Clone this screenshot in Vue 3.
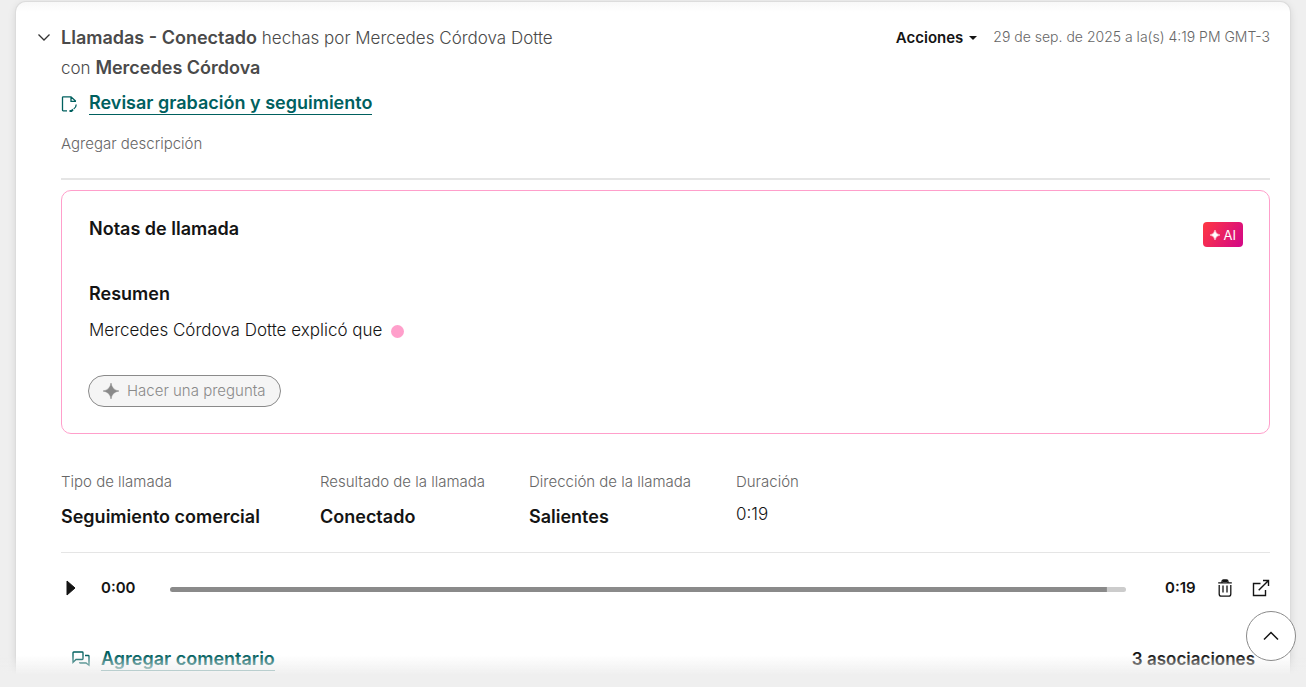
<script setup>
import { ref } from 'vue'

const position = ref(98)
const details = [
  { label: 'Tipo de llamada', value: 'Seguimiento comercial', action: true },
  { label: 'Resultado de la llamada', value: 'Conectado', action: true },
  { label: 'Dirección de la llamada', value: 'Salientes', action: true },
  { label: 'Duración', value: '0:19', action: false }
]
</script>

<template>
  <main class="page">
    <article class="card">
      <header class="head">
        <button class="icon-btn toggle" aria-label="Contraer">
          <svg width="14" height="14" viewBox="0 0 14 14"><path d="M1.5 4.5 7 10l5.500-5.500" fill="none" stroke="currentColor" stroke-width="1.300" /></svg>
        </button>
        <div class="title">
          <div><b>Llamadas - Conectado</b> hechas por Mercedes Córdova Dotte</div>
          <div>con <b>Mercedes Córdova</b></div>
        </div>
        <div class="meta">
          <button class="actions">Acciones
            <svg width="8" height="4" viewBox="0 0 8 4"><path d="M0 0h8L4.500 3.600q-.5.500-1 0z" fill="currentColor" /></svg>
          </button>
          <time>29 de sep. de 2025 a la(s) 4:19 PM GMT-3</time>
        </div>
      </header>

      <div class="body">
        <div class="review">
          <svg width="16" height="18" viewBox="0 0 16 18" fill="none" stroke="currentColor" stroke-width="1.300">
            <path d="M6 15.800H2.200q-.7 0-.7-.7V2.500q0-.7.700-.7H10l4.800 4.500M10 1.800v4.500h5" />
            <path d="M15.200 9.500q0 3-2.500 4.500" />
            <path d="M8.500 16h2l1.500-1.500" stroke-width="1.800" />
          </svg>
          <a href="#" class="link">Revisar grabación y seguimiento</a>
        </div>
        <button class="describe">Agregar descripción</button>

        <section class="notes">
          <div class="notes-head">
            <h2>Notas de llamada</h2>
            <span class="ai">
              <svg width="10" height="10" viewBox="0 0 10 10"><path d="M5 0Q5.700 4.300 10 5 5.700 5.700 5 10 4.300 5.700 0 5 4.300 4.300 5 0z" fill="currentColor" stroke="currentColor" stroke-width=".5" /></svg>AI
            </span>
          </div>
          <h3>Resumen</h3>
          <p>Mercedes Córdova Dotte explicó que <i class="dot"></i></p>
          <button class="ask" disabled>
            <svg width="16" height="16" viewBox="0 0 16 16"><path d="M8 0Q9 7 16 8 9 9 8 16 7 9 0 8 7 7 8 0z" fill="currentColor" stroke="currentColor" stroke-width=".5" /></svg>
            Hacer una pregunta
          </button>
        </section>

        <dl class="details">
          <div v-for="d in details" :key="d.label">
            <dt>{{ d.label }}</dt>
            <dd :class="{ plain: !d.action }">
              <button v-if="d.action">{{ d.value }}</button>
              <template v-else>{{ d.value }}</template>
            </dd>
          </div>
        </dl>

        <div class="player">
          <button class="icon-btn play" aria-label="Reproducir">
            <svg width="10" height="16" viewBox="0 0 10 16"><path d="M1 1v14l8-7z" fill="currentColor" stroke="currentColor" stroke-linejoin="round" /></svg>
          </button>
          <span class="start">0:00</span>
          <input v-model="position" class="track" type="range" min="0" max="100" aria-label="Posición de la grabación" :style="{ '--done': position + '%' }">
          <span class="end">0:19</span>
          <button class="icon-btn trash" aria-label="Eliminar">
            <svg width="16" height="18" viewBox="0 0 16 18" fill="none" stroke="currentColor" stroke-width="1.300">
              <path d="M1.200 3.800h13.600M5 3.500V2.500Q5 1 6.500 1h3Q11 1 11 2.500v1" />
              <path d="M2.200 6v9q0 2.200 2.200 2.200h7.200q2.200 0 2.200-2.200V6M6 6.500v7M10 6.500v7" />
              <path d="M5.500 2h5" stroke-width="2" />
            </svg>
          </button>
          <button class="icon-btn" aria-label="Abrir en otra ventana">
            <svg width="18" height="18" viewBox="0 0 18 18" fill="none" stroke="currentColor" stroke-width="1.400">
              <path d="M8.500 4.500H1.500v12h12V11M11 1.500h5.500V7M16.500 1.500 6.700 11.300" />
            </svg>
          </button>
        </div>

        <footer class="foot">
          <svg width="18" height="16" viewBox="0 0 18 16" fill="none" stroke="currentColor" stroke-width="1.300">
            <path d="M1 11.500V1.700q0-.7.700-.7h8.600q.7 0 .7.700v6.100q0 .7-.7.700H4z" />
            <path d="M13 4.500h3.300q.7 0 .7.700v9L14 12H8.200q-.7 0-.7-.7" />
          </svg>
          <a href="#" class="link">Agregar comentario</a>
          <button class="assoc">3 asociaciones</button>
        </footer>
      </div>
    </article>
    <div class="fade"></div>
    <button class="top" aria-label="Volver arriba">
      <svg width="16" height="10" viewBox="0 0 16 10"><path d="m1 8.500 7-7 7 7" fill="none" stroke="currentColor" stroke-width="1.500" /></svg>
    </button>
  </main>
</template>

<style>
body { background: #efefef; overflow: hidden; }
</style>

<style scoped>
.page {
  padding: 2px 16px 0;
  height: 100vh;
  box-sizing: border-box;
  overflow: hidden;
  font-family: Inter, "Open Sans", sans-serif;
  font-size: 17px;
  font-weight: 300;
  line-height: 30px;
  color: #141414;
}
button { font: inherit; color: inherit; background: none; border: 0; padding: 0; cursor: pointer; }
svg { display: block; flex: none; }
b { font-size: 18px; line-height: 28px; font-weight: 600; }
.card {
  min-height: 100%;
  box-sizing: border-box;
  padding: 21px 20px 20px;
  border-radius: 10px;
  background: linear-gradient(#f8f8f8, #fff 10px);
  box-shadow: 0 0 0 1px #dcdcdc, 0 2px 8px #0002;
}
.head { display: flex; align-items: flex-start; padding-left: 1px; }
.toggle { height: 28px; width: 24px; color: #333; }
.icon-btn { display: flex; align-items: center; }
.title { flex: 1; color: #4a4a4a; }
.meta { display: flex; gap: 16px; line-height: 28px; font-size: 14px; color: #666; }
.actions { display: flex; align-items: center; gap: 6px; font-size: 15px; font-weight: 600; color: #141414; line-height: 30px; }
.body { padding-left: 25px; }
.review { display: flex; align-items: center; gap: 12px; margin-top: 9px; color: #00605f; }
.link { color: #00605f; font-size: 18px; font-weight: 600; line-height: 22px; text-decoration: none; border-bottom: 1px solid; }
.describe { display: block; margin-top: 17px; font-size: 15px; line-height: 24px; color: #666; }
.notes {
  position: relative;
  margin-top: 34px;
  padding: 24px 26px 26px 27px;
  border: 1px solid #ff9fcb;
  border-radius: 10px;
}
.notes::before { content: ""; position: absolute; inset: -13px -1px auto; height: 2px; background: #e5e5e5; }
h2, h3, p, dl, dd { margin: 0; }
h2, h3 { font-size: 18px; line-height: 28px; font-weight: 600; }
h3 { margin-top: 34px; }
.ai {
  display: flex; align-items: center; gap: 4px;
  margin-top: 7px; padding: 0 7px; height: 25px;
  border-radius: 4px; color: #fff; font-size: 13px; font-weight: 400;
  background: linear-gradient(120deg, #ff3842, #d20688);
}
.notes-head { display: flex; align-items: flex-start; justify-content: space-between; height: 31px; }
p { margin-top: 7px; }
.dot { display: inline-block; width: 13px; height: 13px; margin-left: 4px; border-radius: 50%; background: #ff9fcb; vertical-align: -2px; }
.ask {
  display: flex; align-items: center; gap: 8px;
  margin: 30px 0 0 -1px; padding: 0 14px; height: 32px;
  border: 1px solid #8a8a8a; border-radius: 16px;
  background: #f5f5f5; color: #8a8a8a; font-size: 15px;
}
.details { display: grid; grid-template-columns: 214px 164px 162px auto; column-gap: 45px; padding: 36px 0 20px; border-bottom: 1px solid #e5e5e5; }
dt { font-size: 15px; line-height: 24px; color: #666; white-space: nowrap; }
dd { padding-top: 8px; font-size: 18px; font-weight: 600; white-space: nowrap; }
dd.plain { padding-top: 5px; font-size: 17px; font-weight: 300; }
.player { display: flex; align-items: center; padding: 20px 0; font-size: 15px; font-weight: 600; }
.play { width: 40px; padding-left: 5px; box-sizing: border-box; }
.start { width: 69px; }
.end { width: 52px; padding-left: 39px; }
.track {
  flex: 1; min-width: 0; margin: 2px 0 0; height: 5px; appearance: none; border-radius: 3px;
  background: linear-gradient(#8a8a8a, #8a8a8a) 0 0 / var(--done) 100% no-repeat #ccc;
}
.track::-webkit-slider-thumb { appearance: none; width: 1px; height: 5px; background: transparent; }
.trash { margin-right: 19px; }
.foot { display: flex; align-items: center; margin-top: 21px; padding: 0 15px 0 11px; color: #00605f; }
.foot .link { margin-left: 11px; }
.assoc { margin-left: auto; color: #141414; font-weight: 600; }
.fade {
  position: fixed; inset: auto 0 0; height: 32px; pointer-events: none;
  background: linear-gradient(#efefef00, #efefef 20px);
}
.top {
  position: fixed; right: 10px; bottom: 26px; width: 50px; height: 50px;
  display: flex; align-items: center; justify-content: center;
  border: 1px solid #8a8a8a; border-radius: 50%; background: #fff;
}
</style>
